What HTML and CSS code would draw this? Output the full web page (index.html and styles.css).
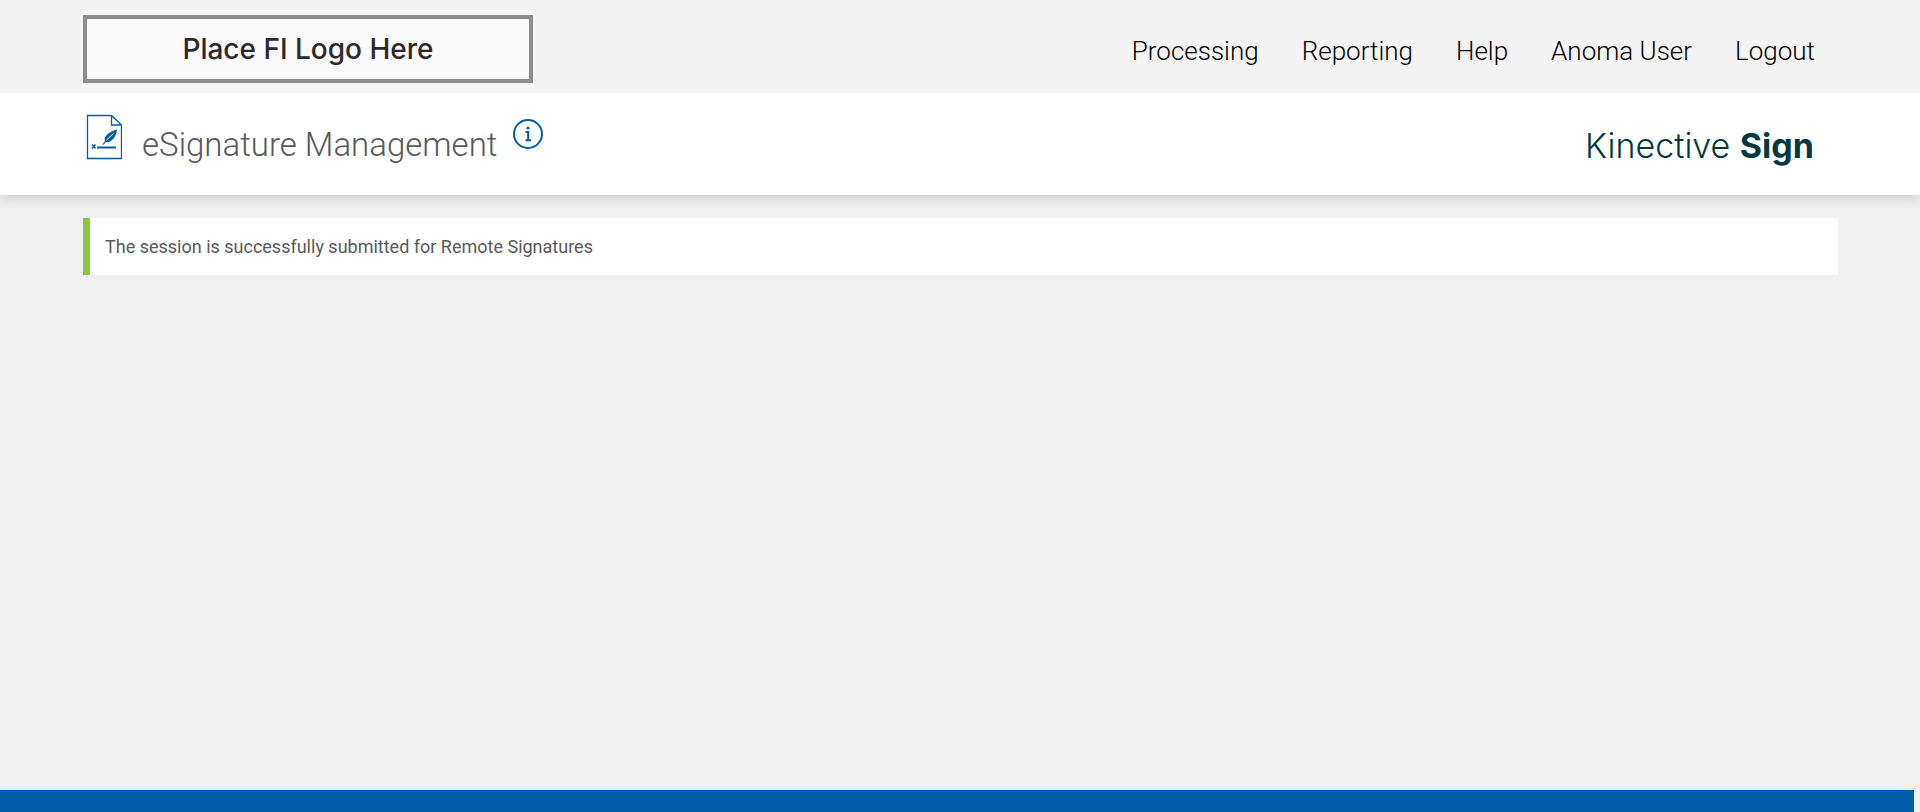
FILE: index.html
```html
<!DOCTYPE html>
<html lang="en">
<head>
<meta charset="utf-8">
<meta name="viewport" content="width=device-width, initial-scale=1">
<title>eSignature Management</title>
<link rel="stylesheet" href="styles.css">
</head>
<body>
<header class="topbar">
  <div class="fi-logo">Place FI Logo Here</div>
  <nav class="nav">
    <a href="#">Processing</a>
    <a href="#">Reporting</a>
    <a href="#">Help</a>
    <a href="#">Anoma User</a>
    <a href="#">Logout</a>
  </nav>
</header>
<div class="titlebar">
  <svg class="doc-icon" viewBox="0 0 36 46" aria-hidden="true">
    <path d="M1.500 1.500H25.500L35.500 11V44.500H1.500Z M25.500 1.500V11H35.500" fill="none" stroke="#005ea8" stroke-width="1.300"/>
    <path d="M11 33.500H30" stroke="#005ea8" stroke-width="2"/>
    <path d="M6 30.500l3.500 4M9.500 30.500L6 34.500" stroke="#005ea8" stroke-width="1.400"/>
    <path d="M16.500 30.500L19 27C17.500 23 22 18 31 15.500C30.500 20 29.500 22 27.500 24.500C25 27.500 22.500 28.500 20 28L17 31Z" fill="#005ea8"/>
    <path d="M20.500 26L27.500 19.500" stroke="#fff" stroke-width="1"/>
  </svg>
  <h1 class="title">eSignature Management</h1>
  <button class="info" type="button" aria-label="Information">
    <svg viewBox="0 0 30 30" aria-hidden="true">
      <circle cx="15" cy="15" r="14" fill="none" stroke="#005ea8" stroke-width="2"/>
      <circle cx="15" cy="9" r="1.600" fill="#005ea8"/>
      <path d="M12.500 13H15.200V21M12.500 21.200H18" fill="none" stroke="#005ea8" stroke-width="2"/>
    </svg>
  </button>
  <div class="brand">Kinective <strong>Sign</strong></div>
</div>
<main class="content">
  <p class="alert" role="status">The session is successfully submitted for Remote Signatures</p>
</main>
<footer class="footer"></footer>
</body>
</html>
```

FILE: styles.css
```css
* { box-sizing: border-box; }
body {
  margin: 0;
  min-height: 100vh;
  display: flex;
  flex-direction: column;
  background: #f0f0f0;
  font-family: Roboto, "Liberation Sans", sans-serif;
  color: #58595b;
}
.topbar {
  position: relative;
  z-index: 1;
  display: flex;
  align-items: center;
  justify-content: space-between;
  padding: 15px 105px 10px 83px;
  background: #f4f4f4;
}
.fi-logo {
  width: 450px;
  padding: 12px 0;
  border: 4px solid #8c8c8c;
  background: #fafafa;
  color: #2d292a;
  font: 500 28px/36px Inter, sans-serif;
  text-align: center;
}
.nav {
  display: flex;
  gap: 43px;
  padding-top: 4px;
}
.nav a {
  color: #000;
  font-size: 26px;
  font-weight: 300;
  line-height: 32px;
  text-decoration: none;
}
.titlebar {
  display: flex;
  align-items: flex-start;
  padding: 21px 106px 21px 86px;
  background: #fff;
  box-shadow: 0 2px 12px rgba(0, 0, 0, 0.16);
}
.doc-icon { width: 36px; height: 46px; }
.title {
  margin: 11px 16px 9px 20px;
  font-size: 33px;
  font-weight: 300;
  line-height: 40px;
}
.info {
  width: 30px;
  height: 30px;
  margin-top: 5px;
  padding: 0;
  border: 0;
  background: none;
  cursor: pointer;
}
.info svg { display: block; }
.brand {
  margin: 12px 0 0 auto;
  color: #003a40;
  font: 300 34px/40px Inter, sans-serif;
}
.brand strong { font-weight: 700; }
.content {
  flex: 1;
  padding: 23px 82px 23px 83px;
}
.alert {
  margin: 0;
  padding: 17px 15px 16px;
  border-left: 7px solid #8dc63f;
  background: #fff;
  font-size: 18px;
  line-height: 24px;
}
.footer {
  height: 22px;
  margin-right: 6px;
  background: #005ea8;
}
```
